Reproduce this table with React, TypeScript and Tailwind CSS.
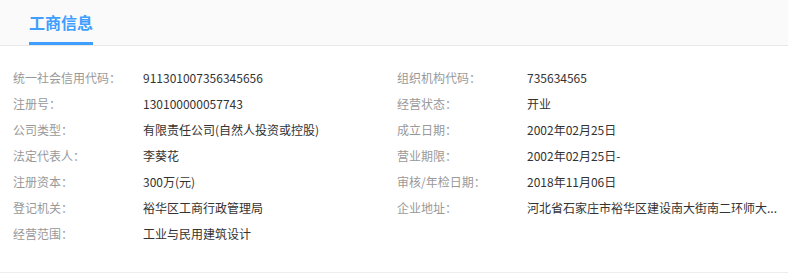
const LEFT: [string, string][] = [
  ['统一社会信用代码：', '911301007356345656'],
  ['注册号：', '130100000057743'],
  ['公司类型：', '有限责任公司(自然人投资或控股)'],
  ['法定代表人：', '李葵花'],
  ['注册资本：', '300万(元)'],
  ['登记机关：', '裕华区工商行政管理局'],
  ['经营范围：', '工业与民用建筑设计'],
]

const RIGHT: [string, string][] = [
  ['组织机构代码：', '735634565'],
  ['经营状态：', '开业'],
  ['成立日期：', '2002年02月25日'],
  ['营业期限：', '2002年02月25日-'],
  ['审核/年检日期：', '2018年11月06日'],
  ['企业地址：', '河北省石家庄市裕华区建设南大街南二环师大...'],
]

function Row({ label, value }: { label: string; value: string }) {
  return (
    <div className="flex h-[26px] items-center whitespace-nowrap">
      <span className="w-[130px] shrink-0 text-[#999999]">{label}</span>
      <span className="text-[#333333]">{value}</span>
    </div>
  )
}

export default function App() {
  return (
    <div
      className="w-[788px] h-[276px] bg-white text-[12px]"
      style={{ fontFamily: '"Noto Sans CJK SC", "Noto Sans", sans-serif' }}
    >
      {/* Tabs */}
      <div className="flex h-[46px] border-b border-[#e8e8e8] bg-[#fafafa] pl-[29px]">
        <div className="flex flex-col justify-end">
          <div className="flex-1 flex items-center text-[16px] font-bold text-[#409eff] leading-none pt-[1px]">
            工商信息
          </div>
          <div className="h-[3px] w-[64px] bg-[#409eff]" />
        </div>
      </div>

      {/* Info grid */}
      <div className="grid grid-cols-[384px_1fr] border-b border-[#eeeeee] pl-[13px] pt-[19px] pb-[25px]">
        <div className="flex flex-col">
          {LEFT.map(([l, v]) => <Row key={l} label={l} value={v} />)}
        </div>
        <div className="flex flex-col">
          {RIGHT.map(([l, v]) => <Row key={l} label={l} value={v} />)}
        </div>
      </div>
    </div>
  )
}
